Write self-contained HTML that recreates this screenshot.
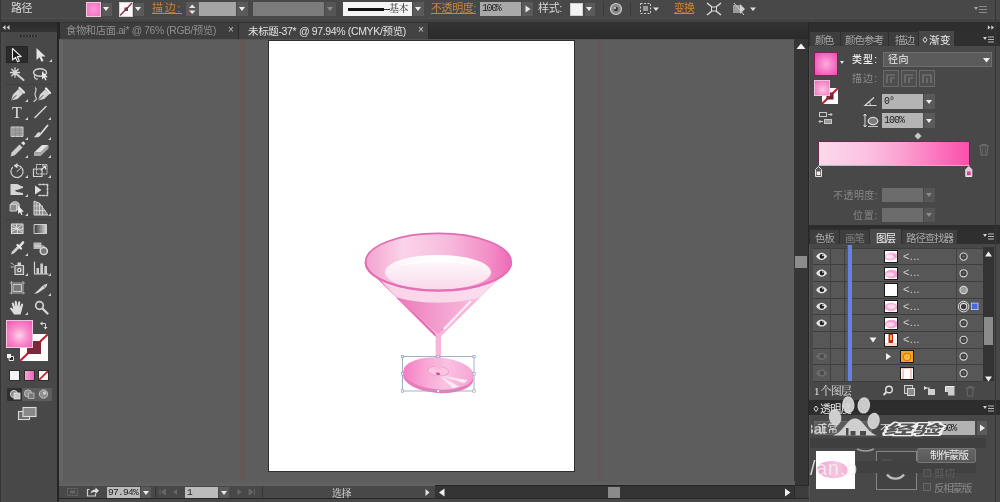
<!DOCTYPE html>
<html lang="zh-CN">
<head>
<meta charset="utf-8">
<title>Illustrator</title>
<style>
html,body{margin:0;padding:0;}
body{width:1000px;height:502px;overflow:hidden;background:#5d5d5d;position:relative;
 font-family:"Liberation Sans","Noto Sans CJK SC",sans-serif;font-size:11px;color:#d6d6d6;}
.a{position:absolute;box-sizing:border-box;}
.t{position:absolute;white-space:nowrap;line-height:1;will-change:transform;}
.g{will-change:transform;}
svg{position:absolute;overflow:visible;}
/* top control bar */
#ctrl{left:0;top:0;width:1000px;height:17.5px;background:#484848;}
#strip{left:0;top:17.5px;width:1000px;height:4.5px;background:linear-gradient(#4e4e4e 0 33%,#434343 33% 100%);}
#tabs{left:58.5px;top:22px;width:750px;height:16.5px;background:linear-gradient(#333,#2a2a2a);}
.tab{top:22.5px;height:16px;}
/* toolbar */
#tools{left:0;top:22px;width:57px;height:480px;background:#484848;}
#toolshead{left:0;top:22px;width:57px;height:9.5px;background:linear-gradient(#2a2a2a,#343434);}
#toolsedge{left:57px;top:22px;width:1.5px;height:480px;background:#242424;}
/* canvas */
#canvas{left:58.5px;top:38.5px;width:736px;height:448px;background:#5d5d5d;border-left:4.5px solid #656565;border-top:1px solid #555;}
#art{left:269px;top:41px;width:304.5px;height:429.5px;background:#fff;box-shadow:0 0 0 1px #2f2f2f;}
/* status */
#status{left:58.5px;top:486px;width:750px;height:16px;background:#484848;}
/* right */
#vscroll{left:794px;top:38.5px;width:14px;height:447px;background:#363636;}
#dockgap{left:807.5px;top:22px;width:1.5px;height:480px;background:#262626;}
#dock{left:809px;top:22px;width:191px;height:480px;background:#484848;}

.dd{background:#5a5a5a;}
.dd::after{content:"";position:absolute;left:50%;top:50%;margin:-2px 0 0 -3.5px;border:3.5px solid transparent;border-top:4px solid #ececec;border-bottom:0;}
.dd.dim{background:#555;}
.dd.dim::after{border-top-color:#8a8a8a;}
</style>
</head>
<body>


<!-- ===== structure ===== -->
<div class="a" id="canvas"></div>
<div class="a" id="art"></div>
<div class="a" style="left:241.6px;top:38.5px;width:1.3px;height:446.5px;background:#70524f;box-shadow:0 0 1.5px 0.5px rgba(120,85,80,.3);"></div>
<div class="a" style="left:598.9px;top:38.5px;width:1.3px;height:446.5px;background:#6e514c;box-shadow:0 0 1.5px 0.5px rgba(120,85,80,.3);"></div>
<div class="a" id="ctrl"></div>
<div class="a" id="strip"></div>
<div class="a" id="tabs"></div>
<div class="a" id="tools"></div>
<div class="a" id="toolshead"></div>
<div class="a" id="toolsedge"></div>
<div class="a" id="status"></div>
<div class="a" id="vscroll"></div>
<div class="a" style="left:795px;top:256px;width:12px;height:12px;background:#8c8c8c;"></div>
<svg width="12" height="8" style="left:795px;top:42px"><path d="M1.500 7h9L6 1.500z" fill="#f2f2f2"/></svg>
<div class="a" id="dockgap"></div>
<div class="a" id="dock"></div>
<div class="a" style="left:0;top:0;width:1px;height:502px;background:#353535;"></div>
<div class="a" style="left:1.5px;top:31.5px;width:1px;height:470px;background:#4e4e4e;"></div>
<!-- ===== /structure ===== -->

<!-- control bar -->
<div class="t" style="left:11px;top:3px;font-size:11px;color:#dcdcdc;letter-spacing:-0.50px;">路径</div>
<div class="a" style="left:86px;top:2px;width:14.5px;height:14.5px;border:1px solid #f3c6e0;background:radial-gradient(circle,#fb9ad8 0%,#f56dc0 100%);"></div>
<div class="a dd" style="left:101.5px;top:2.5px;width:10.5px;height:13.5px;"></div>
<div class="a" style="left:119px;top:2px;width:14px;height:14.5px;background:#fdf6f8;border:1px solid #d8cfd2;overflow:hidden;">
 <svg width="13" height="13" style="left:0;top:0"><line x1="0" y1="12.500" x2="12" y2="0" stroke="#8e2a3c" stroke-width="1.300"/><rect x="4.500" y="4.500" width="3.500" height="3.500" fill="#6a3a48"/></svg></div>
<div class="a dd" style="left:133.5px;top:2.5px;width:10.5px;height:13.5px;"></div>
<div class="t" style="left:152px;top:3px;font-size:11px;color:#cf8434;letter-spacing:1.65px;text-decoration:underline">描边:</div>
<div class="a" style="left:186px;top:2px;width:12.5px;height:14px;background:#5a5a5a;"></div>
<svg width="12" height="14" style="left:186px;top:2px"><path d="M3 6 L6.200 2.500 L9.500 6Z M3 8.500 L6.200 12 L9.500 8.500Z" fill="#e6e6e6"/></svg>
<div class="a" style="left:199px;top:2px;width:36.5px;height:14px;background:#a5a5a5;"></div>
<div class="a dd" style="left:237px;top:2px;width:11px;height:14px;"></div>
<div class="a" style="left:253px;top:2px;width:71px;height:14px;background:#7b7b7b;"></div>
<div class="a dd dim" style="left:325px;top:2px;width:11px;height:14px;"></div>
<div class="a" style="left:343px;top:2px;width:69px;height:14px;background:#f4f4f4;"></div>
<div class="a" style="left:348px;top:7.5px;width:36px;height:3px;background:#111;"></div>
<div class="a" style="left:384px;top:9px;width:6px;height:1px;background:#333;"></div>
<div class="t" style="left:388.5px;top:4px;font-size:10px;color:#222;letter-spacing:-0.50px;font-family:'Liberation Serif','Noto Serif CJK SC',serif">基本</div>
<div class="a dd" style="left:413px;top:2px;width:11px;height:14px;"></div>
<div class="t" style="left:431px;top:3px;font-size:11px;color:#cf8434;letter-spacing:-0.41px;text-decoration:underline">不透明度:</div>
<div class="a" style="left:480px;top:2px;width:41px;height:14px;background:#a9a9a9;"></div>
<div class="t" style="left:482px;top:4px;font-size:10px;color:#222;letter-spacing:-1.38px;font-family:'Liberation Mono',monospace">100%</div>
<div class="a" style="left:522px;top:2px;width:11px;height:14px;background:#5a5a5a;"></div>
<svg width="11" height="14" style="left:522px;top:2px"><path d="M3.5 3.5 L8.5 7 L3.5 10.5Z" fill="#e6e6e6"/></svg>
<div class="t" style="left:538px;top:3px;font-size:11px;color:#d8d8d8;letter-spacing:-0.35px;">样式:</div>
<div class="a" style="left:570px;top:2.5px;width:13px;height:13.5px;background:#f2f2f2;border:1px solid #cfcfcf;"></div>
<div class="a dd" style="left:584.5px;top:2.5px;width:10px;height:13.5px;"></div>
<div class="a" style="left:603px;top:2px;width:1px;height:14px;background:#3a3a3a;"></div>
<svg width="14" height="14" style="left:609px;top:2px"><circle cx="7" cy="7" r="5.5" fill="#8a8a8a" stroke="#cfcfcf" stroke-width="1.2"/><circle cx="7" cy="7" r="2.2" fill="#3c3c3c"/><circle cx="6" cy="6" r="1" fill="#ddd"/></svg>
<div class="a" style="left:630px;top:2px;width:1px;height:14px;background:#3a3a3a;"></div>
<svg width="22" height="14" style="left:639px;top:2px"><rect x="1.5" y="1.5" width="10" height="10" fill="none" stroke="#cfcfcf" stroke-width="1" stroke-dasharray="2 1.5"/><rect x="4" y="4" width="5" height="5" fill="#9a9a9a"/><path d="M14 5.5 L20 5.5 L17 9Z" fill="#e0e0e0"/></svg>
<div class="t" style="left:674px;top:3px;font-size:11px;color:#cf8434;letter-spacing:-1.00px;text-decoration:underline">变换</div>
<svg width="16" height="14" style="left:706px;top:2px"><path d="M1 1 L6 5 M15 1 L10 5 M1 13 L6 9 M15 13 L10 9" stroke="#d6d6d6" stroke-width="1.6" fill="none"/><rect x="5.5" y="5" width="5" height="4" fill="none" stroke="#d6d6d6" stroke-width="1"/></svg>
<svg width="26" height="14" style="left:732px;top:2px"><rect x="1" y="3" width="7" height="8" fill="#9b9b9b"/><path d="M8 2 L13 7 L8 12Z" fill="#d0d0d0"/><path d="M2 1 L12 13" stroke="#cfcfcf" stroke-width="1"/><path d="M18 5.5 L24 5.5 L21 9Z" fill="#e0e0e0"/></svg>
<svg width="14" height="10" style="left:974px;top:5px"><path d="M0 2 L4 2 L2 5Z" fill="#a9a9a9"/><path d="M5 1.5 H13 M5 4.5 H13 M5 7.5 H13" stroke="#8a8a8a" stroke-width="1"/></svg>



<!-- document tabs -->
<div class="a tab" style="left:58.5px;width:180px;background:#3d3d3d;border-left:1.5px solid #242424;border-right:1px solid #2a2a2a;"></div>
<div class="a tab" style="left:239px;width:190px;background:#434343;border-right:1px solid #2a2a2a;"></div>
<div class="t" style="left:66px;top:25.8px;font-size:10.3px;color:#8f8f8f;letter-spacing:-0.36px;">食物和店面.ai* @ 76% (RGB/预览)</div>
<div class="t" style="left:228.3px;top:24.5px;font-size:10px;color:#bdbdbd;">×</div>
<div class="t" style="left:248px;top:25.8px;font-size:10.5px;color:#e2e2e2;letter-spacing:-0.35px;">未标题-37* @ 97.94% (CMYK/预览)</div>
<div class="t" style="left:418px;top:24.5px;font-size:10px;color:#d0d0d0;">×</div>


<!-- tools panel -->
<svg width="10" height="8" style="left:2px;top:24px"><path d="M0.500 3.500L3.500 1v5zM4.500 3.500L7.500 1v5z" fill="#cfcfcf"/></svg>
<div class="a" style="left:20px;top:35px;width:18px;height:2px;background:repeating-linear-gradient(90deg,#2e2e2e 0 2px,#565656 2px 3px);"></div>
<div class="a" style="left:6px;top:46px;width:22px;height:17px;background:#2b2b2b;border:1px solid #242424;"></div>
<svg width="60" height="502" style="left:0;top:0" fill="none" stroke-linecap="round" stroke-linejoin="round">
 <g fill="#cfcfcf" stroke="none">
  <!-- sub-tool corner triangles -->
  <path d="M52 59v3h-3z M28 99v3h-3z M28 117v3h-3z M51 117v3h-3z M28 137v3h-3z M51 137v3h-3z M28 155v3h-3z M51 155v3h-3z M28 175v3h-3z M51 175v3h-3z M28 194v3h-3z M28 213v3h-3z M51 213v3h-3z M28 253v3h-3z M28 273v3h-3z M51 273v3h-3z M51 293v3h-3z M28 312v3h-3z"/>
 </g>
 <!-- 1 selection (active) -->
 <path d="M12.5 48.5v11.5l3-2.7 2 4.4 1.8-.8-2-4.3h3.9z" fill="#1c1c1c" stroke="#ececec" stroke-width="1.1"/>
 <!-- 2 direct selection -->
 <path d="M36.5 48v12l3-2.8 2 4.5 2-.9-2-4.4h4z" fill="#e4e4e4"/>
 <!-- 3 magic wand -->
 <path d="M15 68v9M10.5 72.5h9M11.8 69.3l6.4 6.4M18.2 69.3l-6.4 6.4" stroke="#d8d8d8" stroke-width="1.3"/>
 <path d="M16.5 74l7 6" stroke="#d0d0d0" stroke-width="2"/>
 <!-- 4 lasso -->
 <ellipse cx="40" cy="72.5" rx="6.5" ry="3.8" stroke="#d2d2d2" stroke-width="1.4"/>
 <path d="M35 75c-1.5 2 0 4.500 2.500 4" stroke="#d2d2d2" stroke-width="1.2"/>
 <path d="M42 71v8.500l2-1.800 1.300 2.800 1.300-.6-1.300-2.700h2.600z" fill="#e6e6e6"/>
 <!-- 5 pen -->
 <path d="M11 100.500l2-6 5.500-5.500 4.500 4.500-5.500 5.500z" fill="#d6d6d6"/>
 <path d="M11 100.500l5-5" stroke="#484848" stroke-width="1"/>
 <path d="M19.500 88l4.500 4.500" stroke="#ededed" stroke-width="2.200"/>
 <!-- 6 curvature pen -->
 <path d="M38 100.500l2-6 5-5 4.500 4.500-5.500 5z" fill="#d6d6d6"/>
 <path d="M38 100.500l5-5" stroke="#484848" stroke-width="1"/>
 <path d="M46 88.500l4 4.500" stroke="#ededed" stroke-width="2.200"/>
 <path d="M35.500 88c2.500 2.500-2.500 5 0 8.500s-1 4-1.500 5" stroke="#d0d0d0" stroke-width="1.200"/>
 <!-- 8 line -->
 <path d="M35 117.500l11-11" stroke="#d8d8d8" stroke-width="1.500"/>
 <!-- 9 rect grid -->
 <rect x="11.500" y="127" width="11.500" height="9.500" fill="#9d9d9d" stroke="#cdcdcd" stroke-width="1"/>
 <path d="M15.500 127v9.500M19.500 127v9.500M11.500 130h11.500M11.500 133.500h11.500" stroke="#8a8a8a" stroke-width=".6"/>
 <!-- 10 brush -->
 <path d="M47.500 125.500l-6.500 8" stroke="#dcdcdc" stroke-width="1.800"/>
 <path d="M33.500 137c2.500.8 6.500.3 7.500-2.500.5-1.800-1.700-3-3.300-1.800-1.700 1.300-1.600 3.500-4.200 4.300z" fill="#d8d8d8"/>
 <!-- 11 pencil -->
 <path d="M10.500 156.500l1.300-4.200 8-8 3 3-8 8z" fill="#cfcfcf"/>
 <path d="M19.800 144.300l3 3" stroke="#4a4a4a" stroke-width=".9"/>
 <path d="M21 143l2.300-1.800 2 2-1.500 2.300z" fill="#e8e8e8"/>
 <!-- 12 eraser -->
 <path d="M34 152.500l8-7.500h6.500l-8 7.500z" fill="#e2e2e2"/>
 <path d="M34 152.500h6.500v3.500h-6.500zM40.500 152.500l8-7.500v3.500l-8 7.500z" fill="#a9a9a9"/>
 <!-- 13 rotate -->
 <path d="M12.500 167.500a6 6 0 1 0 5-2" stroke="#d0d0d0" stroke-width="1.300" stroke-dasharray="2.200 1.200"/>
 <path d="M17.500 163v5.500l-4-2.700z" fill="#d8d8d8"/>
 <path d="M17 171.500l3.500-3" stroke="#cfcfcf" stroke-width="1"/>
 <!-- 14 scale -->
 <rect x="33.500" y="169" width="8.500" height="7.500" stroke="#d2d2d2" stroke-width="1.200"/>
 <rect x="36.500" y="164.500" width="10.500" height="9.500" stroke="#c4c4c4" stroke-width="1" stroke-dasharray="1.600 1.200"/>
 <path d="M41 170l4.500-4M45.500 169v-3h-3" stroke="#e0e0e0" stroke-width="1.100"/>
 <!-- 15 width -->
 <path d="M10.500 184h6c2 0 3.500 2 6.500 2.500v1.500c-3 .5-4.500 2-6.500 2s-1.500 1-.5 1.500c1.500.7 4.500 1 7 1.500v2h-12.500z" fill="#d4d4d4"/>
 <!-- 16 free transform -->
 <path d="M35 185.500l6.500 4.500-6.500 4.500z" fill="#dedede"/>
 <path d="M39 184.500h8.500M39 195.500h8.500M47.500 184.500v11" stroke="#cdcdcd" stroke-width="1.600" stroke-dasharray="2 1.600"/>
 <!-- 17 shape builder -->
 <circle cx="15" cy="206" r="4.300" fill="#a8a8a8" stroke="#d4d4d4" stroke-width="1.100"/>
 <path d="M10.500 204.500h6v6.500h-6z" stroke="#cfcfcf" stroke-width="1" fill="#8c8c8c"/>
 <path d="M18 205.500v8.500l2-1.800 1.300 2.800 1.300-.6-1.300-2.700h2.600z" fill="#eaeaea"/>
 <!-- 18 perspective grid -->
 <path d="M34 201.500v13.500h5.500v-11.500zM39.500 203.500v11.500h8z" fill="#8e8e8e" stroke="#d6d6d6" stroke-width="1"/>
 <path d="M36.700 202.500v12.500M34 206h8.200M34 210.500h11M42.500 206.500v8.500" stroke="#d6d6d6" stroke-width=".8"/>
 <!-- 19 mesh -->
 <rect x="11.500" y="224" width="11.500" height="9.500" fill="#8d8d8d" stroke="#dadada" stroke-width="1.100"/>
 <path d="M11.500 229c4-2 7 2 11.500-.5M17 224c-2 3 2 6 0 9.500M12 231.500l5-3 5 3.500M13 225.500l4 3 4.500-3.500" stroke="#e6e6e6" stroke-width=".9"/>
 <!-- 20 gradient -->
 <defs><linearGradient id="gt" x1="0" x2="1"><stop offset="0" stop-color="#3c3c3c"/><stop offset="1" stop-color="#d8d8d8"/></linearGradient></defs>
 <rect x="34.500" y="224.500" width="12" height="9" fill="url(#gt)" stroke="#cfcfcf" stroke-width="1"/>
 <!-- 21 eyedropper -->
 <path d="M11 254.500l1-3 6-6 2 2-6 6z" fill="#cfcfcf"/>
 <path d="M17.500 245l3.500 3.500" stroke="#e4e4e4" stroke-width="2.400"/>
 <path d="M19.500 246.500l3.500-4" stroke="#e4e4e4" stroke-width="2.600"/>
 <!-- 22 blend -->
 <rect x="33.500" y="242.500" width="8" height="6.500" fill="#b9b9b9"/>
 <path d="M35 246h9v4" stroke="#d8d8d8" stroke-width="1"/>
 <circle cx="43.800" cy="251" r="3.600" stroke="#dcdcdc" stroke-width="1.500" fill="#777"/>
 <!-- 23 symbol sprayer -->
 <rect x="15" y="265.500" width="8.500" height="9" stroke="#d6d6d6" stroke-width="1.200" fill="#6a6a6a"/>
 <rect x="17.500" y="262.500" width="3.500" height="3" fill="#d6d6d6"/>
 <circle cx="19.300" cy="270" r="2.200" fill="#e2e2e2"/><circle cx="19.300" cy="270" r=".9" fill="#333"/>
 <path d="M11 263l2.500 1.500M11 267h2.500" stroke="#c4c4c4" stroke-width="1"/>
 <!-- 24 graph -->
 <path d="M34.500 262v12h13.500" stroke="#d6d6d6" stroke-width="1.200"/>
 <path d="M36.500 268h2.500v6h-2.500zM40.300 263.500h2.700v10.500h-2.700zM44.300 266h2.700v8h-2.700z" fill="#cbcbcb"/>
 <!-- 25 artboard -->
 <rect x="13" y="284.500" width="8.500" height="7" stroke="#c9c9c9" stroke-width="1.100" fill="#777"/>
 <path d="M11.500 281.500v12.500M23 281.500v12.500M10 283h14.500M10 293h14.500" stroke="#bdbdbd" stroke-width=".9"/>
 <!-- 26 slice -->
 <path d="M34 294l9.500-9 4-1.500-1.500 4-8 5.500z" fill="#d6d6d6"/>
 <path d="M43 285.500l2.500 2.500" stroke="#555" stroke-width=".8"/>
 <!-- 27 hand -->
 <path d="M14 314.500c-1.200-2.500-3.200-4.300-4.200-6.300.9-1.100 2.300-.5 3.500 1l-1.500-5.600c0-1.200 1.500-1.500 2 -.3l1.300 3.600-.4-5.200c.2-1.300 1.800-1.300 2.100 0l.6 5 .8-4.600c.4-1.200 1.900-1 2 .3l-.5 5 1.600-3.300c.6-1 2-.5 1.800.7-1 3.400-1.200 6.200-2.600 9.700z" fill="#dcdcdc"/>
 <!-- 28 zoom -->
 <circle cx="39.500" cy="305.500" r="3.800" stroke="#d2d2d2" stroke-width="1.700"/>
 <path d="M42.500 308.500l5 5" stroke="#d2d2d2" stroke-width="2.400"/>
 <!-- swap arrows -->
 <path d="M41 323.500h4.500v4.500" stroke="#cfcfcf" stroke-width="1"/>
 <path d="M40 323.500l2.500-2v4zM45.500 329.500l-2-2.500h4z" fill="#dcdcdc"/>
 <!-- default fill/stroke -->
 <rect x="9.500" y="356.500" width="4" height="4" fill="#2a2a2a" stroke="#e6e6e6" stroke-width="1"/>
 <rect x="7" y="354" width="4" height="4" fill="#f2f2f2"/>
</svg>
<div class="t" style="left:11.5px;top:104.5px;font-size:16px;color:#e0e0e0;font-family:'Liberation Serif',serif;">T</div>
<!-- separators -->
<div class="a" style="left:5px;top:84px;width:48px;height:1px;background:#404040;"></div>
<div class="a" style="left:5px;top:219px;width:48px;height:1px;background:#404040;"></div>
<!-- stroke swatch (behind) -->
<div class="a" style="left:20px;top:334px;width:28px;height:27px;background:#fff;overflow:hidden;">
 <svg width="28" height="27" style="left:0;top:0"><path d="M0 27L28 0" stroke="#c41e2a" stroke-width="2"/><rect x="7" y="7" width="14" height="13" fill="#7a2a3a"/><path d="M7 20L21 7" stroke="#8f2030" stroke-width="1.500"/></svg>
</div>
<!-- fill swatch -->
<div class="a" style="left:6px;top:320px;width:27px;height:28px;border:1px solid #f4c3df;background:radial-gradient(circle at 50% 55%,#fcd3ea 0%,#f98ccc 45%,#ee56b0 100%);"></div>
<!-- colour / gradient / none -->
<div class="a" style="left:9px;top:370px;width:11px;height:11px;background:#f4f4f4;border:1px solid #2e2e2e;"></div>
<div class="a" style="left:24px;top:370px;width:11px;height:11px;background:linear-gradient(90deg,#f9a5d8,#ee63b8);border:1px solid #2e2e2e;"></div>
<div class="a" style="left:38px;top:370px;width:11px;height:11px;background:#f4f4f4;border:1px solid #2e2e2e;overflow:hidden;"><svg width="9" height="9" style="left:0;top:0"><path d="M0 9L9 0" stroke="#d0202c" stroke-width="1.800"/></svg></div>
<!-- draw modes -->
<div class="a" style="left:7px;top:387.5px;width:14.5px;height:13px;background:#2f2f2f;border-radius:1px;"></div>
<div class="a" style="left:22px;top:387.5px;width:30px;height:13px;background:#5d5d5d;border-radius:1px;"></div>
<svg width="60" height="40" style="left:0;top:386px" fill="none">
 <circle cx="14" cy="8" r="3.600" fill="#8a8a8a" stroke="#d0d0d0" stroke-width="1"/><rect x="14" y="7" width="6" height="6" fill="#c8c8c8" stroke="#e6e6e6" stroke-width=".8"/>
 <circle cx="28" cy="7.500" r="3.600" fill="#8f8f8f" stroke="#c2c2c2" stroke-width="1"/><rect x="28.500" y="7" width="5.500" height="5.500" fill="#777" stroke="#bdbdbd" stroke-width=".8"/>
 <circle cx="43.500" cy="8" r="4.200" fill="#8d8d8d" stroke="#c2c2c2" stroke-width="1"/><circle cx="44.500" cy="7" r="1.800" fill="#c9c9c9"/>
 <!-- screen mode -->
 <rect x="18.500" y="25.500" width="11" height="8" fill="#6c6c6c" stroke="#d8d8d8" stroke-width="1.100"/>
 <rect x="23" y="21.500" width="13" height="9" fill="#888" stroke="#dedede" stroke-width="1.100"/>
</svg>

<!-- artwork: cocktail glass -->
<svg width="1000" height="502" style="left:0;top:0" fill="none">
 <defs>
  <linearGradient id="gRim" x1="0" x2="1">
   <stop offset="0" stop-color="#f3a2d0"/><stop offset=".26" stop-color="#fbd4e9"/>
   <stop offset=".55" stop-color="#f8bcdd"/><stop offset=".84" stop-color="#f38fc8"/><stop offset="1" stop-color="#ef6ab7"/>
  </linearGradient>
  <linearGradient id="gCone" x1="0" x2="1">
   <stop offset="0" stop-color="#ec6fb6"/><stop offset=".18" stop-color="#f5a9d4"/>
   <stop offset=".6" stop-color="#f8c9e3"/><stop offset=".86" stop-color="#fbe2f0"/><stop offset="1" stop-color="#f4a5d2"/>
  </linearGradient>
  <linearGradient id="gLiq" x1="0" x2="1">
   <stop offset="0" stop-color="#ec78bb"/><stop offset=".4" stop-color="#f297cb"/><stop offset="1" stop-color="#f8c0df"/>
  </linearGradient>
  <linearGradient id="gSurf" x1="0" y1="0" x2="0" y2="1">
   <stop offset="0" stop-color="#ffffff"/><stop offset=".4" stop-color="#fdeff7"/><stop offset="1" stop-color="#f9d9eb"/>
  </linearGradient>
  <linearGradient id="gBase" x1="0" x2="1">
   <stop offset="0" stop-color="#f47fc2"/><stop offset=".3" stop-color="#f8a5d4"/>
   <stop offset=".6" stop-color="#f9c3e1"/><stop offset="1" stop-color="#f6a4d3"/>
  </linearGradient>
 </defs>
 <!-- cone -->
 <path d="M365.500 264L435.700 336h5.300L511.500 264z" fill="url(#gCone)"/>
 <path d="M366 266L436.200 336" stroke="#e765b1" stroke-width="2"/>
 <path d="M511 266L440.800 335.500" stroke="#f6b6da" stroke-width="1.200"/>
 <path d="M371 270c30 24 104 24 135 0l-26 27.500c-26 7-58 7-84 0z" fill="#fadcec" opacity=".85"/>
 <path d="M396 297.500c26 7 58 7 84 0L440 333.500h-3z" fill="url(#gLiq)"/>
 <path d="M471 301l-27 28" stroke="#fdeef6" stroke-width="2.200"/>
 <!-- stem -->
 <rect x="435.600" y="334" width="5.400" height="27" fill="#f8b7da"/>
 <!-- bowl -->
 <ellipse cx="438.400" cy="262" rx="72.800" ry="28.600" fill="url(#gRim)" stroke="#e16cb1" stroke-width="1.700"/>
 <ellipse cx="438" cy="272.300" rx="53" ry="17.300" fill="url(#gSurf)"/>
 <path d="M400 266c18-9 58-9 76 0-20-5-56-5-76 0z" fill="#ffffff"/>
 <path d="M365.600 262a72.800 28.600 0 0 0 145.600 0" stroke="#e56fb4" stroke-width="2"/>
 <!-- base -->
 <g transform="rotate(4 438.500 374)">
  <ellipse cx="438.500" cy="377" rx="35.300" ry="16" fill="#e77dbb"/>
  <ellipse cx="438.500" cy="373.500" rx="35.300" ry="16" fill="url(#gBase)"/>
  <path d="M440 376l14 11.500 6-2.500zM441 375.500l24 6 3-3.500z" fill="#fdf0f7" opacity=".9"/>
  <ellipse cx="438" cy="371" rx="10.500" ry="4.800" fill="#f9c6e2" stroke="#f1a0cf" stroke-width="1"/>
  <ellipse cx="438" cy="373.800" rx="2.300" ry="1.300" fill="#c9539a"/>
 </g>
 <rect x="435.800" y="356" width="5" height="14" fill="#f8b7da"/>
 <!-- selection bounding box -->
 <rect x="402.500" y="356.500" width="71.500" height="34.500" stroke="#9aa6c4" stroke-width=".9"/>
 <g fill="#fff" stroke="#8e98b4" stroke-width=".6" transform="translate(.3 .3)">
  <rect x="401" y="355" width="2.400" height="2.400"/><rect x="436.700" y="355" width="2.400" height="2.400"/><rect x="472.500" y="355" width="2.400" height="2.400"/>
  <rect x="401" y="372.300" width="2.400" height="2.400"/><rect x="472.500" y="372.300" width="2.400" height="2.400"/>
  <rect x="401" y="389.500" width="2.400" height="2.400"/><rect x="436.700" y="389.500" width="2.400" height="2.400"/><rect x="472.500" y="389.500" width="2.400" height="2.400"/>
 </g>
</svg>

<!-- status bar -->
<div class="a" style="left:58.5px;top:481px;width:736px;height:4.5px;background:linear-gradient(#5d5d5d,#626262);"></div>
<div class="a" style="left:58.5px;top:485.5px;width:750px;height:16.5px;background:#484848;"></div>
<div class="a" style="left:58.5px;top:498.2px;width:750px;height:1.2px;background:#272727;"></div>
<div class="a" style="left:435px;top:485.3px;width:360px;height:13px;background:#343434;border-top:1.4px solid #242424;"></div>
<div class="a" style="left:794px;top:485.3px;width:14px;height:13px;background:#3c3c3c;border-left:1px solid #2a2a2a;border-top:1.4px solid #2a2a2a;"></div>
<div class="a" style="left:608px;top:487px;width:12px;height:11px;background:#8b8b8b;"></div>
<svg width="750" height="16" style="left:60px;top:485px" fill="none">
 <!-- left icons -->
 <rect x="7.500" y="3.500" width="10" height="7" stroke="#6b6b6b" stroke-width="1" stroke-dasharray="2 1"/>
 <rect x="10" y="5.500" width="5" height="3" fill="#666"/>
 <path d="M29.500 4.500h-2v6.500h8v-2.500" stroke="#d0d0d0" stroke-width="1.200"/>
 <path d="M30.500 8.500c.5-3 2.500-4 5-4v-2l3.500 3.200-3.500 3.200v-2c-2 0-3.500.3-5 1.600z" fill="#dcdcdc"/>
 <!-- nav arrows -->
 <path d="M100 4v6M105.500 4l-4 3 4 3z" stroke="#666" stroke-width="1" fill="#666"/>
 <path d="M117 4l-4 3 4 3z" fill="#666"/>
 <path d="M177.500 4l4 3-4 3z" fill="#6a6a6a"/>
 <path d="M189 4l4 3-4 3zM194.500 4v6" stroke="#666" stroke-width="1" fill="#666"/>
 <!-- status popup arrow / scroll arrows -->
 <path d="M365.500 4l4 3.500-4 3.500z" fill="#e2e2e2"/>
 <path d="M384.500 3.500l-5.500 4 5.500 4z" fill="#f0f0f0"/>
 <path d="M725 3.500l5.500 4-5.500 4z" fill="#f0f0f0"/>
</svg>
<div class="a" style="left:107px;top:487px;width:33px;height:11px;background:#bcbcbc;"></div>
<div class="a dd" style="left:141px;top:487px;width:10px;height:11px;"></div>
<div class="t" style="left:108px;top:488px;font-size:9.5px;color:#1e1e1e;letter-spacing:-0.70px;font-family:'Liberation Mono',monospace">97.94%</div>
<div class="a" style="left:185px;top:487px;width:33px;height:11px;background:#bcbcbc;"></div>
<div class="a dd" style="left:219px;top:487px;width:10px;height:11px;"></div>
<div class="t" style="left:187px;top:488px;font-size:9.5px;color:#1e1e1e;letter-spacing:0.00px;font-family:'Liberation Mono',monospace">1</div>
<div class="a" style="left:155px;top:486px;width:1px;height:12px;background:#353535;"></div>
<div class="a" style="left:262px;top:486px;width:1px;height:12px;background:#353535;"></div>
<div class="t" style="left:332px;top:489px;font-size:10px;color:#e4e4e4;letter-spacing:-0.50px;font-family:'Liberation Serif','Noto Serif CJK SC',serif">选择</div>

<!-- right dock: gradient panel -->
<div class="a" style="left:809px;top:22px;width:191px;height:9px;background:#2e2e2e;"></div>
<svg width="10" height="8" style="left:986.5px;top:24px"><path d="M7 3.500L4.300 1.300v4.400zM3.500 3.500L0.800 1.300v4.400z" fill="#cfcfcf"/></svg>
<div class="a" style="left:809px;top:31px;width:191px;height:15px;background:#2f2f2f;"></div>
<div class="a" style="left:810px;top:32px;width:30px;height:14px;background:#3e3e3e;"></div>
<div class="a" style="left:841px;top:32px;width:47px;height:14px;background:#3e3e3e;"></div>
<div class="a" style="left:889px;top:32px;width:29px;height:14px;background:#3e3e3e;"></div>
<div class="a" style="left:919px;top:31px;width:35px;height:16px;background:#484848;"></div>
<div class="t" style="left:815px;top:35px;font-size:10.5px;color:#a8a8a8;letter-spacing:-1.50px;">颜色</div>
<div class="t" style="left:845px;top:35px;font-size:10.5px;color:#a8a8a8;letter-spacing:-1.00px;">颜色参考</div>
<div class="t" style="left:895px;top:35px;font-size:10.5px;color:#a8a8a8;letter-spacing:-1.00px;">描边</div>
<svg width="6" height="8" style="left:922px;top:36px"><path d="M3 1L5 3.800 3 6.600 1 3.800z" fill="none" stroke="#d8d8d8" stroke-width="1"/></svg>
<div class="t" style="left:929px;top:35px;font-size:10.5px;color:#ececec;letter-spacing:0.50px;">渐变</div>
<svg width="12" height="8" style="left:983px;top:36px"><path d="M0 1h4L2 4z" fill="#cfcfcf"/><path d="M5 1h6M5 3.500h6M5 6h6" stroke="#b8b8b8" stroke-width="1"/></svg>
<div class="a" style="left:809px;top:46px;width:191px;height:179px;background:#484848;border-left:1px solid #535353;"></div>
<!-- big swatch -->
<div class="a" style="left:814px;top:52px;width:24px;height:24px;border:1px solid #8a1c5c;background:radial-gradient(circle at 50% 50%,#fbaee0 0%,#f77cca 45%,#ee48ab 100%);"></div>
<svg width="5" height="4" style="left:840px;top:61px"><path d="M0 0h4L2 3z" fill="#e6e6e6"/></svg>
<div class="t" style="left:852px;top:55px;font-size:10px;color:#f0f0f0;letter-spacing:1.07px;font-weight:500">类型:</div>
<div class="a" style="left:883px;top:52px;width:109px;height:15px;background:#5b5b5b;border:1px solid #6e6e6e;"></div>
<div class="t" style="left:888px;top:55px;font-size:10px;color:#f0f0f0;letter-spacing:0.50px;">径向</div>
<svg width="9" height="6" style="left:983px;top:57.5px"><path d="M0 0h7L3.500 4.500z" fill="#ececec"/></svg>
<div class="t" style="left:852px;top:74px;font-size:10px;color:#8c8c8c;letter-spacing:1.07px;">描边:</div>
<svg width="56" height="18" style="left:883px;top:70px" fill="none">
 <g stroke="#6b6b6b" stroke-width="1"><rect x=".5" y=".5" width="15" height="16" fill="#4e4e4e"/><rect x="18.500" y=".5" width="15" height="16" fill="#4e4e4e"/><rect x="36.500" y=".5" width="15" height="16" fill="#4e4e4e"/></g>
 <g stroke="#7c7c7c" stroke-width="1.200"><path d="M4 13V5h8M8 13V8h4"/><path d="M22 13V5h8M26 13V8h4"/><path d="M40 13V5h8v8M44 13V8"/></g>
</svg>
<!-- fill / stroke mini -->
<div class="a" style="left:822px;top:88px;width:16px;height:16px;background:#fff;overflow:hidden;"><svg width="16" height="16" style="left:0;top:0"><path d="M0 16L16 0" stroke="#c41e2a" stroke-width="2"/><rect x="4.500" y="4.500" width="7" height="7" fill="#6a2030"/><path d="M4.500 11.500l7-7" stroke="#a82838" stroke-width="1.200"/></svg></div>
<div class="a" style="left:814px;top:80px;width:16px;height:16px;border:1px solid #f3bfdc;background:radial-gradient(circle at 55% 60%,#fbc4e3 0%,#f58cc8 60%,#ec6ab6 100%);"></div>
<!-- reverse gradient icon -->
<svg width="16" height="14" style="left:818px;top:111px" fill="none"><rect x="1.500" y="1.500" width="7" height="4" stroke="#c8c8c8" stroke-width="1"/><rect x="6.500" y="8.500" width="7" height="4" stroke="#c8c8c8" stroke-width="1" fill="#999"/><path d="M10 3.500h4M12.500 2l1.500 1.500-1.500 1.500M5 10.500H1M2.500 9L1 10.500 2.500 12" stroke="#d8d8d8" stroke-width=".9"/></svg>
<!-- angle -->
<svg width="14" height="11" style="left:864px;top:96px" fill="none"><path d="M1 9.500h11.500L1 9.500 10 1.500" stroke="#d6d6d6" stroke-width="1.200"/><path d="M6.500 9.500a5 5 0 0 0-1.600-3.600" stroke="#d6d6d6" stroke-width="1"/></svg>
<div class="a" style="left:882px;top:94px;width:41px;height:15px;background:#b4b4b4;"></div>
<div class="t" style="left:884px;top:97px;font-size:10px;color:#1c1c1c;letter-spacing:-1.01px;font-family:'Liberation Mono',monospace">0°</div>
<div class="a dd" style="left:924px;top:94px;width:11px;height:15px;"></div>
<!-- aspect -->
<svg width="16" height="15" style="left:863px;top:113px" fill="none"><path d="M2 1v13M.500 3L2 1l1.500 2M.500 12L2 14l1.500-2" stroke="#dcdcdc" stroke-width="1"/><ellipse cx="10" cy="8" rx="4.800" ry="3.600" stroke="#d6d6d6" stroke-width="1.300" fill="#7a7a7a"/><path d="M5 13.500h10" stroke="#c8c8c8" stroke-width="1"/></svg>
<div class="a" style="left:882px;top:113px;width:41px;height:15px;background:#b4b4b4;"></div>
<div class="t" style="left:884px;top:116px;font-size:10px;color:#1c1c1c;letter-spacing:-1.00px;font-family:'Liberation Mono',monospace">100%</div>
<div class="a dd" style="left:924px;top:113px;width:11px;height:15px;"></div>
<!-- gradient slider -->
<svg width="8" height="8" style="left:914px;top:132px"><path d="M4 .5L7.500 4 4 7.500.5 4z" fill="#c9c9c9"/></svg>
<div class="a" style="left:818px;top:141px;width:152px;height:25px;background:linear-gradient(90deg,#fcd9ec 0%,#fbc3e2 31%,#fa9fd0 57%,#fb78bf 77%,#fb4faa 100%);border:1px solid #6e2a4c;border-bottom-color:#f99ccd;"></div>
<svg width="170" height="14" style="left:810px;top:165px" fill="none">
 <path d="M5.500 11.500v-7L8.500 1.500l3 3v7z" fill="#5a5a5a" stroke="#e4e4e4" stroke-width="1"/><rect x="6.700" y="6.500" width="3.600" height="3.600" fill="#fdeef6"/>
 <path d="M155.800 11.500v-7L158.800 1.500l3 3v7z" fill="#e9c3d8" stroke="#ececec" stroke-width="1"/><rect x="157" y="6.500" width="3.600" height="3.600" fill="#d93f97"/>
</svg>
<svg width="12" height="13" style="left:978px;top:143px" fill="none"><path d="M1 3h10M4 3V1.500h4V3M2.500 3.500l.7 8.500h5.600l.7-8.500" stroke="#6e6e6e" stroke-width="1.100"/><path d="M4.700 5v5.500M7.300 5v5.500" stroke="#626262" stroke-width=".9"/></svg>
<div class="t" style="left:833px;top:190.5px;font-size:10px;color:#878787;letter-spacing:0.44px;">不透明度:</div>
<div class="a" style="left:882px;top:188px;width:41px;height:14px;background:#6c6c6c;"></div>
<div class="a dd dim" style="left:924px;top:188px;width:11px;height:14px;"></div>
<div class="t" style="left:853px;top:210.5px;font-size:10px;color:#878787;letter-spacing:0.74px;">位置:</div>
<div class="a" style="left:882px;top:208px;width:41px;height:14px;background:#6c6c6c;"></div>
<div class="a dd dim" style="left:924px;top:208px;width:11px;height:14px;"></div>

<!-- layers panel -->
<div class="a" style="left:809px;top:225px;width:191px;height:4px;background:#2c2c2c;"></div>
<div class="a" style="left:809px;top:229px;width:191px;height:15px;background:#2f2f2f;"></div>
<div class="a" style="left:810px;top:230px;width:29px;height:14px;background:#3e3e3e;"></div>
<div class="a" style="left:840px;top:230px;width:29px;height:14px;background:#3e3e3e;"></div>
<div class="a" style="left:870px;top:229px;width:31px;height:16px;background:#4a4a4a;"></div>
<div class="a" style="left:902px;top:230px;width:55px;height:14px;background:#3e3e3e;"></div>
<div class="t" style="left:815px;top:233px;font-size:10.5px;color:#a8a8a8;letter-spacing:-1.00px;">色板</div>
<div class="t" style="left:845px;top:233px;font-size:10.5px;color:#7e7e7e;letter-spacing:-1.00px;">画笔</div>
<div class="t" style="left:876px;top:233px;font-size:10.5px;color:#f0f0f0;letter-spacing:-1.00px;">图层</div>
<div class="t" style="left:906px;top:233px;font-size:10.5px;color:#a8a8a8;letter-spacing:-1.10px;">路径查找器</div>
<svg width="12" height="8" style="left:983px;top:233px"><path d="M0 1h4L2 4z" fill="#cfcfcf"/><path d="M5 1h6M5 3.500h6M5 6h6" stroke="#b8b8b8" stroke-width="1"/></svg>
<div class="a" style="left:809px;top:244px;width:191px;height:156px;background:#484848;border-left:1px solid #535353;"></div>
<div class="a" style="left:813px;top:248.3px;width:170px;height:133.2px;background:#575757;"></div>
<div class="a" style="left:813px;top:247.8px;width:170px;height:1px;background:#3d3d3d;"></div>
<div class="a" style="left:813px;top:264.4px;width:170px;height:1px;background:#3d3d3d;"></div>
<div class="a" style="left:813px;top:281.1px;width:170px;height:1px;background:#3d3d3d;"></div>
<div class="a" style="left:813px;top:297.8px;width:170px;height:1px;background:#3d3d3d;"></div>
<div class="a" style="left:813px;top:314.4px;width:170px;height:1px;background:#3d3d3d;"></div>
<div class="a" style="left:813px;top:331.1px;width:170px;height:1px;background:#3d3d3d;"></div>
<div class="a" style="left:813px;top:347.7px;width:170px;height:1px;background:#3d3d3d;"></div>
<div class="a" style="left:813px;top:364.4px;width:170px;height:1px;background:#3d3d3d;"></div>
<div class="a" style="left:813px;top:381.0px;width:170px;height:1px;background:#3d3d3d;"></div>
<div class="a" style="left:830px;top:248.3px;width:1px;height:133.2px;background:#424242;"></div>
<div class="a" style="left:843.5px;top:248.3px;width:1px;height:133.2px;background:#424242;"></div>
<div class="a" style="left:955.5px;top:248.3px;width:1px;height:133.2px;background:#424242;"></div>
<div class="a" style="left:846.5px;top:244.8px;width:5px;height:136.7px;background:linear-gradient(90deg,#3f57b8 0 20%,#6482e2 20% 100%);"></div>
<div class="a" style="left:983px;top:247.3px;width:11px;height:134.2px;background:#333;"></div>
<div class="a" style="left:984px;top:317px;width:9px;height:28px;background:#8b8b8b;"></div>
<svg width="11" height="140" style="left:983px;top:247.5px"><path d="M2 8.500h7L5.500 3.500z" fill="#f0f0f0"/><path d="M2 128.500h7L5.500 133.500z" fill="#f0f0f0"/></svg>
<svg width="191" height="160" style="left:809px;top:244px" fill="none">
<path d="M7.1 12.6c3-5 8-5 11 0-3 4.500-8 4.500-11 0z" fill="#e4e4e4"/>
<circle cx="12.9" cy="12.4" r="2.300" fill="#1e1e1e"/>
<circle cx="13.9" cy="11.4" r=".8" fill="#f4f4f4"/>
<circle cx="154.6" cy="12.6" r="3.600" stroke="#d8d8d8" stroke-width="1.100" fill="#404040"/>
<circle cx="154.6" cy="12.6" r="1" fill="#777"/>
<path d="M7.1 29.3c3-5 8-5 11 0-3 4.500-8 4.500-11 0z" fill="#e4e4e4"/>
<circle cx="12.9" cy="29.1" r="2.300" fill="#1e1e1e"/>
<circle cx="13.9" cy="28.1" r=".8" fill="#f4f4f4"/>
<circle cx="154.6" cy="29.3" r="3.600" stroke="#d8d8d8" stroke-width="1.100" fill="#404040"/>
<circle cx="154.6" cy="29.3" r="1" fill="#777"/>
<path d="M7.1 45.9c3-5 8-5 11 0-3 4.500-8 4.500-11 0z" fill="#e4e4e4"/>
<circle cx="12.9" cy="45.7" r="2.300" fill="#1e1e1e"/>
<circle cx="13.9" cy="44.7" r=".8" fill="#f4f4f4"/>
<circle cx="154.6" cy="45.9" r="3.700" stroke="#d8d8d8" stroke-width="1.100" fill="#9c9c9c"/>
<path d="M7.1 62.6c3-5 8-5 11 0-3 4.500-8 4.500-11 0z" fill="#e4e4e4"/>
<circle cx="12.9" cy="62.4" r="2.300" fill="#1e1e1e"/>
<circle cx="13.9" cy="61.4" r=".8" fill="#f4f4f4"/>
<circle cx="154.6" cy="62.6" r="5.300" stroke="#e0e0e0" stroke-width="1"/>
<circle cx="154.6" cy="62.6" r="3.200" stroke="#e0e0e0" stroke-width="1.100" fill="#3a3a3a"/>
<rect x="162.500" y="59.1" width="6.500" height="6.500" fill="#4a6ae0" stroke="#c8d2ff" stroke-width=".8"/>
<path d="M7.1 79.2c3-5 8-5 11 0-3 4.500-8 4.500-11 0z" fill="#e4e4e4"/>
<circle cx="12.9" cy="79.0" r="2.300" fill="#1e1e1e"/>
<circle cx="13.9" cy="78.0" r=".8" fill="#f4f4f4"/>
<circle cx="154.6" cy="79.2" r="3.600" stroke="#d8d8d8" stroke-width="1.100" fill="#404040"/>
<circle cx="154.6" cy="79.2" r="1" fill="#777"/>
<circle cx="154.6" cy="95.9" r="3.600" stroke="#d8d8d8" stroke-width="1.100" fill="#404040"/>
<circle cx="154.6" cy="95.9" r="1" fill="#777"/>
<path d="M7.1 112.5c3-5 8-5 11 0-3 4.500-8 4.500-11 0z" fill="#6e6e6e"/>
<circle cx="12.9" cy="112.3" r="2.300" fill="#4c4c4c"/>
<circle cx="154.6" cy="112.5" r="3.600" stroke="#d8d8d8" stroke-width="1.100" fill="#404040"/>
<circle cx="154.6" cy="112.5" r="1" fill="#777"/>
<path d="M7.1 129.2c3-5 8-5 11 0-3 4.500-8 4.500-11 0z" fill="#6e6e6e"/>
<circle cx="12.9" cy="129.0" r="2.300" fill="#4c4c4c"/>
<circle cx="154.6" cy="129.2" r="3.600" stroke="#d8d8d8" stroke-width="1.100" fill="#404040"/>
<circle cx="154.6" cy="129.2" r="1" fill="#777"/>
<path d="M60.5 93.4h7l-3.500 5z" fill="#f0f0f0"/>
<path d="M77 109.0v7l5-3.500z" fill="#f0f0f0"/>
<circle cx="80" cy="145.5" r="3.300" stroke="#e0e0e0" stroke-width="1.400"/><path d="M77.5 148l-3 3" stroke="#e0e0e0" stroke-width="1.800"/>
<rect x="95.5" y="141.5" width="8" height="8" stroke="#d0d0d0" stroke-width="1" fill="#5a5a5a"/><rect x="98.5" y="144.5" width="7" height="7" stroke="#d8d8d8" stroke-width="1" fill="#8a8a8a"/>
<path d="M116 144h4v2" stroke="#dcdcdc" stroke-width="1.200"/><rect x="119" y="145" width="7" height="6" fill="#cfcfcf"/><path d="M115 142l3 2-3 2z" fill="#e4e4e4"/>
<rect x="136.5" y="142.5" width="9" height="9" fill="#cdcdcd"/><path d="M136.5 151.5v-9h9" stroke="#f0f0f0" stroke-width="1"/><rect x="135" y="148" width="4" height="4" fill="#484848"/>
<path d="M157 144h9M160 144v-1.500h3v1.500M158 144.5l.6 7.500h5l.6-7.500" stroke="#666" stroke-width="1.100"/>
</svg>
<div class="a" style="left:884px;top:249.9px;width:14px;height:13.500px;background:#fff;border:1px solid #1a1a1a;overflow:hidden;"><svg width="12" height="12" style="left:0;top:0"><ellipse cx="6" cy="5.500" rx="6.500" ry="4" fill="#f7bfdd" transform="rotate(-10 6 5.500)"/><ellipse cx="4.500" cy="5.500" rx="3.500" ry="2" fill="#fde6f2"/><path d="M8 3.500c2 .5 3 2 3 3.500" stroke="#f08fc5" stroke-width="1.200" fill="none"/></svg></div>
<div class="a" style="left:884px;top:266.6px;width:14px;height:13.500px;background:#fff;border:1px solid #1a1a1a;overflow:hidden;"><svg width="12" height="12" style="left:0;top:0"><ellipse cx="6.500" cy="6" rx="6.500" ry="4.200" fill="#f3a3d0"/><ellipse cx="5" cy="6.500" rx="4" ry="2.200" fill="#fad5e9"/></svg></div>
<div class="a" style="left:884px;top:283.2px;width:14px;height:13.500px;background:#fff;border:1px solid #1a1a1a;overflow:hidden;"></div>
<div class="a" style="left:884px;top:299.9px;width:14px;height:13.500px;background:#fff;border:1px solid #1a1a1a;overflow:hidden;"><svg width="12" height="12" style="left:0;top:0"><ellipse cx="6" cy="6" rx="6.500" ry="4.200" fill="#f5b0d6"/><ellipse cx="6.500" cy="5.500" rx="4" ry="2.200" fill="#fbdcec"/></svg></div>
<div class="a" style="left:884px;top:316.5px;width:14px;height:13.500px;background:#fff;border:1px solid #1a1a1a;overflow:hidden;"><svg width="12" height="12" style="left:0;top:0"><ellipse cx="6.500" cy="6" rx="6.500" ry="4.200" fill="#f3a3d0"/><ellipse cx="5" cy="6.500" rx="4" ry="2.200" fill="#fad5e9"/></svg></div>
<div class="a" style="left:884px;top:333.2px;width:14px;height:13.500px;background:#fff;border:1px solid #1a1a1a;overflow:hidden;"><svg width="12" height="12" style="left:0;top:0"><rect x="3.500" y="0" width="4.500" height="12" fill="#c8251e"/><rect x="5" y="1" width="2" height="5" fill="#f4b33a"/><rect x="0" y="9" width="12" height="3" fill="#f6d9c9"/></svg></div>
<div class="a" style="left:900px;top:349.8px;width:14px;height:13.500px;background:#fff;border:1px solid #1a1a1a;overflow:hidden;"><svg width="12" height="12" style="left:0;top:0"><rect width="12" height="12" fill="#f7a521"/><circle cx="6" cy="6" r="3.800" fill="#fbb93a" stroke="#c8741a" stroke-width="1"/></svg></div>
<div class="a" style="left:900px;top:366.5px;width:14px;height:13.500px;background:#fff;border:1px solid #1a1a1a;overflow:hidden;"><svg width="12" height="12" style="left:0;top:0"><path d="M2 0v12M10 0v12" stroke="#e9b5a6" stroke-width="1.400"/><path d="M0 .5h12" stroke="#f0c8bc" stroke-width="1"/></svg></div>
<div class="t" style="left:903px;top:250.8px;font-size:11px;color:#d2d2d2;letter-spacing:0.35px;">&lt;...</div>
<div class="t" style="left:903px;top:267.4px;font-size:11px;color:#d2d2d2;letter-spacing:0.35px;">&lt;...</div>
<div class="t" style="left:903px;top:284.1px;font-size:11px;color:#d2d2d2;letter-spacing:0.35px;">&lt;...</div>
<div class="t" style="left:903px;top:300.8px;font-size:11px;color:#d2d2d2;letter-spacing:0.35px;">&lt;...</div>
<div class="t" style="left:903px;top:317.4px;font-size:11px;color:#d2d2d2;letter-spacing:0.35px;">&lt;...</div>
<div class="t" style="left:903px;top:334.1px;font-size:11px;color:#d2d2d2;letter-spacing:0.35px;">&lt;...</div>
<div class="t" style="left:814px;top:386px;font-size:11px;color:#e4e4e4;letter-spacing:-0.85px;font-family:'Liberation Serif','Noto Serif CJK SC',serif">1 个图层</div>

<!-- transparency panel -->
<div class="a" style="left:809px;top:400px;width:191px;height:3px;background:#2c2c2c;"></div>
<div class="a" style="left:809px;top:403px;width:191px;height:12px;background:#2d2d2d;"></div>
<div class="a" style="left:809px;top:415px;width:191px;height:87px;background:#484848;border-left:1px solid #535353;"></div>
<svg width="6" height="8" style="left:813px;top:405px"><path d="M3 1L5 3.800 3 6.600 1 3.800z" fill="none" stroke="#d8d8d8" stroke-width="1"/></svg>
<div class="t" style="left:820px;top:404px;font-size:11px;color:#e6e6e6;letter-spacing:-0.67px;">透明度</div>
<svg width="12" height="8" style="left:983px;top:405px"><path d="M0 1h4L2 4z" fill="#cfcfcf"/><path d="M5 1h6M5 3.500h6M5 6h6" stroke="#b8b8b8" stroke-width="1"/></svg>
<!-- blend mode + opacity -->
<div class="a" style="left:814px;top:421px;width:58px;height:14px;background:#5b5b5b;border:1px solid #6a6a6a;"></div>
<div class="t" style="left:817px;top:423px;font-size:10.5px;color:#e4e4e4;letter-spacing:0.00px;">正常</div>
<div class="t" style="left:880px;top:423px;font-size:10.5px;color:#dcdcdc;letter-spacing:0.02px;">不透明度:</div>
<div class="a" style="left:928px;top:421px;width:47px;height:14px;background:#b2b2b2;"></div>
<div class="t" style="left:937px;top:424px;font-size:10px;color:#1c1c1c;letter-spacing:-1.25px;font-family:'Liberation Mono',monospace">100%</div>
<div class="a" style="left:977px;top:421px;width:10px;height:14px;background:#5a5a5a;"></div>
<svg width="10" height="14" style="left:977px;top:421px"><path d="M3 3.500L8 7 3 10.500z" fill="#ececec"/></svg>
<!-- thumbnail + mask -->
<div class="a" style="left:816px;top:451px;width:39px;height:38px;background:#fff;"></div>
<svg width="39" height="38" style="left:816px;top:451px"><defs><linearGradient id="gTh" x1="0" x2="1"><stop offset="0" stop-color="#f0a3cd"/><stop offset=".6" stop-color="#f6c6e0"/><stop offset="1" stop-color="#f2b2d6"/></linearGradient></defs><ellipse cx="16.500" cy="18.600" rx="15.300" ry="8.600" fill="url(#gTh)" transform="rotate(3 16.500 18.600)"/></svg>
<div class="a" style="left:876px;top:450.5px;width:40.5px;height:39.5px;border:1px solid #858585;background:#434343;"></div>
<svg width="40" height="39" style="left:876px;top:451px" fill="none"><path d="M11 23.500c4 5.500 13 5.500 17 0" stroke="#bdbdbd" stroke-width="2.200"/><path d="M6 9h10" stroke="#5c5c5c" stroke-width="1"/></svg>
<div class="a" style="left:861px;top:462px;width:10px;height:1px;background:#5e5e5e;"></div>
<!-- darker overlay strips (watermark backing) -->
<div class="a" style="left:810px;top:437.5px;width:176px;height:10.5px;background:#3f3f3f;"></div>
<div class="a" style="left:856px;top:461px;width:120px;height:12px;background:#414141;"></div>
<!-- buttons -->
<div class="a" style="left:917px;top:448px;width:59px;height:15px;background:linear-gradient(#666,#585858);border:1px solid #777;border-radius:2px;"></div>
<div class="t" style="left:930px;top:450px;font-size:10.5px;color:#ececec;letter-spacing:-1.00px;">制作蒙版</div>
<div class="a" style="left:923px;top:469px;width:8px;height:8px;border:1px solid #5a5a5a;background:#4a4a4a;"></div>
<div class="t" style="left:934px;top:468px;font-size:10.5px;color:#5f5f5f;letter-spacing:0.00px;">剪切</div>
<div class="a" style="left:923px;top:483px;width:8px;height:8px;border:1px solid #686868;background:#4c4c4c;"></div>
<div class="t" style="left:934px;top:483px;font-size:10.5px;color:#8a8a8a;letter-spacing:-1.25px;">反相蒙版</div>

<!-- watermark overlay -->
<svg width="200" height="110" style="left:800px;top:392px" fill="none">
 <g fill="#d9d9d9" opacity=".93">
  <ellipse cx="35.100" cy="25.300" rx="6.200" ry="8.400" transform="rotate(-8 35.100 25.300)"/>
  <ellipse cx="48.400" cy="12.700" rx="6.100" ry="8.500" transform="rotate(-4 48.400 12.700)"/>
  <ellipse cx="63.800" cy="13.400" rx="6.300" ry="8.200" transform="rotate(6 63.800 13.400)"/>
  <ellipse cx="73.600" cy="29" rx="6.100" ry="8.300" transform="rotate(10 73.600 29)"/>
  <path d="M33 43.500c5-1.500 9-6 13-11 3.500-4.500 6-6 9-6s5.500 1.500 9 6c4 5 8 9.500 13 11z"/>
 </g>
 <g fill="#4a4a4a"><rect x="46" y="36" width="2.500" height="7.500"/><rect x="50.500" y="39" width="5" height="4.500"/><rect x="60" y="39" width="6" height="4.500"/></g>
 <g stroke="#bdbdbd" stroke-width=".8" opacity=".7"><ellipse cx="48.400" cy="12.700" rx="3" ry="5"/><ellipse cx="63.800" cy="13.400" rx="3" ry="5"/><ellipse cx="73.600" cy="29" rx="3" ry="5"/></g>
</svg>
<div class="a" style="left:811px;top:419px;width:18px;height:18px;overflow:hidden;"><div class="t" style="left:-8px;top:2px;font-size:15px;font-weight:700;color:#d4d4d4;opacity:.85;font-family:'Liberation Sans',sans-serif;letter-spacing:0px;">Bai</div></div>
<svg class="g" width="70" height="20" style="left:880px;top:418px"><text x="4" y="15.500" font-size="13" font-weight="900" font-style="italic" font-family="'Liberation Sans','Noto Sans CJK SC',sans-serif" textLength="56" lengthAdjust="spacingAndGlyphs" fill="#555" stroke="#f0f0f0" stroke-width="2.600" paint-order="stroke" stroke-linejoin="round">经验</text></svg>
<div class="t" style="left:809.5px;top:459px;font-size:19.5px;color:#f4f4f4cc;letter-spacing:0.93px;font-family:'Liberation Sans',sans-serif">/an.b</div>
<svg width="24" height="8" style="left:856px;top:446px" fill="none"><path d="M1 3c5 2.500 12 2.500 17 0" stroke="#b9b9b9" stroke-width="1.500" opacity=".75"/></svg>
<div class="a" style="left:994.6px;top:0;width:1.4px;height:502px;background:#363636;"></div>

</body>
</html>
